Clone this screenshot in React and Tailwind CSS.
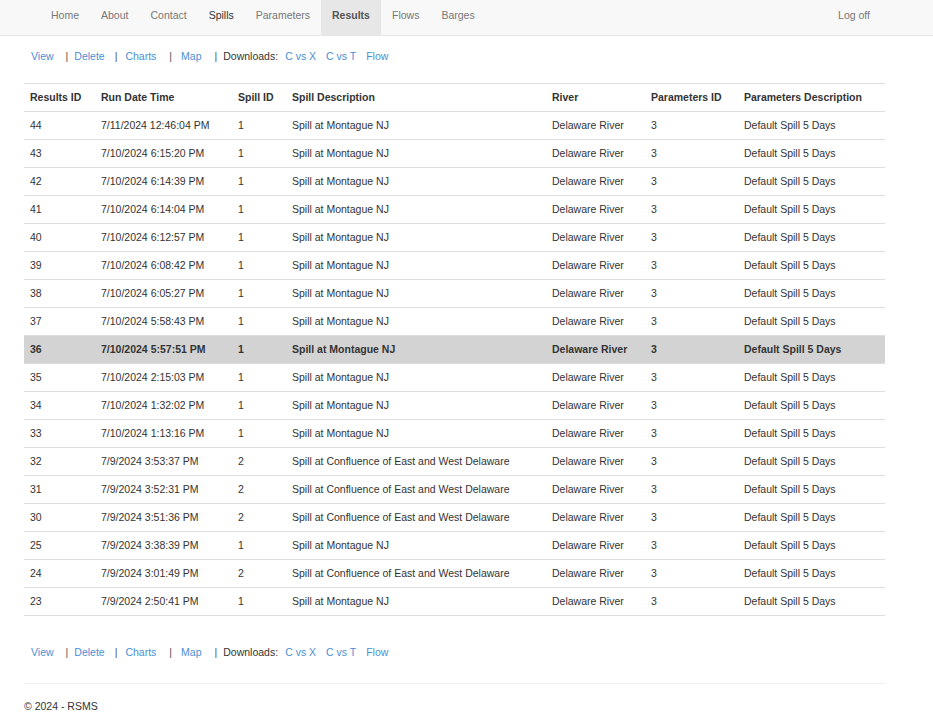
import React from 'react';

const navItems = [
  { label: 'Home', cls: 'text-[#777]' },
  { label: 'About', cls: 'text-[#777]' },
  { label: 'Contact', cls: 'text-[#777]' },
  { label: 'Spills', cls: 'text-[#333]' },
  { label: 'Parameters', cls: 'text-[#777]' },
  { label: 'Results', cls: 'text-[#555] font-bold bg-[#e7e7e7]' },
  { label: 'Flows', cls: 'text-[#777]' },
  { label: 'Barges', cls: 'text-[#777]' },
];

const montague = 'Spill at Montague NJ';
const confluence = 'Spill at Confluence of East and West Delaware';

const rows = [
  [44, '7/11/2024 12:46:04 PM', 1, montague],
  [43, '7/10/2024 6:15:20 PM', 1, montague],
  [42, '7/10/2024 6:14:39 PM', 1, montague],
  [41, '7/10/2024 6:14:04 PM', 1, montague],
  [40, '7/10/2024 6:12:57 PM', 1, montague],
  [39, '7/10/2024 6:08:42 PM', 1, montague],
  [38, '7/10/2024 6:05:27 PM', 1, montague],
  [37, '7/10/2024 5:58:43 PM', 1, montague],
  [36, '7/10/2024 5:57:51 PM', 1, montague],
  [35, '7/10/2024 2:15:03 PM', 1, montague],
  [34, '7/10/2024 1:32:02 PM', 1, montague],
  [33, '7/10/2024 1:13:16 PM', 1, montague],
  [32, '7/9/2024 3:53:37 PM', 2, confluence],
  [31, '7/9/2024 3:52:31 PM', 2, confluence],
  [30, '7/9/2024 3:51:36 PM', 2, confluence],
  [25, '7/9/2024 3:38:39 PM', 1, montague],
  [24, '7/9/2024 3:01:49 PM', 2, confluence],
  [23, '7/9/2024 2:50:41 PM', 1, montague],
];

const cols = ['w-[71px]', 'w-[137px]', 'w-[54px]', 'w-[260px]', 'w-[99px]', 'w-[93px]', 'w-[147px]'];
const headers = ['Results ID', 'Run Date Time', 'Spill ID', 'Spill Description', 'River', 'Parameters ID', 'Parameters Description'];

const ActionLinks = () => (
  <div className="flex items-center h-[16px] pl-[7px] text-[10.5px]">
    <a className="text-[#4a8fd4]">View</a>
    <span className="text-[#555] ml-[12px]">|</span>
    <a className="text-[#4a8fd4] ml-[6px]">Delete</a>
    <span className="text-[#555] ml-[10px]">|</span>
    <a className="text-[#4a8fd4] ml-[8px]">Charts</a>
    <span className="text-[#555] ml-[13px]">|</span>
    <a className="text-[#4a8fd4] ml-[9px]">Map</a>
    <span className="text-[#555] ml-[13px]">|</span>
    <span className="text-[#333] ml-[6px]">Downloads:</span>
    <a className="text-[#4a8fd4] ml-[7px]">C vs X</a>
    <a className="text-[#4a8fd4] ml-[10px]">C vs T</a>
    <a className="text-[#4a8fd4] ml-[10px]">Flow</a>
  </div>
);

export default function App() {
  return (
    <div className="min-h-screen bg-white text-[#333] text-[10.5px] font-['Liberation_Sans',Arial,sans-serif]">
      <nav className="h-[36px] bg-[#f8f8f8] border-b border-[#e7e7e7] flex justify-between pl-[40px] pr-[51px]">
        <ul className="flex h-[35px]">
          {navItems.map((n) => (
            <li key={n.label} className={`px-[11px] pb-[4px] flex items-center ${n.cls}`}>{n.label}</li>
          ))}
        </ul>
        <div className="flex items-center px-[12px] pb-[4px] text-[#777] h-[35px]">Log off</div>
      </nav>

      <div className="w-[861px] ml-[24px]">
        <div className="pt-[13px]">
          <ActionLinks />
        </div>

        <table className="mt-[18px] w-[861px] border-collapse table-fixed">
          <thead>
            <tr className="h-[28px] border-t border-b border-[#ddd]">
              {headers.map((h, i) => (
                <th key={h} className={`${cols[i]} text-left font-bold pl-[6px] text-[#333]`}>{h}</th>
              ))}
            </tr>
          </thead>
          <tbody>
            {rows.map((r) => {
              const hl = r[0] === 36;
              return (
                <tr key={r[0]} className={`h-[28px] border-b border-[#ddd] ${hl ? 'bg-[#d3d3d3] font-bold' : ''}`}>
                  <td className="pl-[6px]">{r[0]}</td>
                  <td className="pl-[6px]">{r[1]}</td>
                  <td className="pl-[6px]">{r[2]}</td>
                  <td className="pl-[6px]">{r[3]}</td>
                  <td className="pl-[6px]">Delaware River</td>
                  <td className="pl-[6px]">3</td>
                  <td className="pl-[6px]">Default Spill 5 Days</td>
                </tr>
              );
            })}
          </tbody>
        </table>

        <div className="mt-[29px]">
          <ActionLinks />
        </div>

        <hr className="mt-[22px] border-t border-[#eee]" />
        <footer className="mt-[15px] h-[16px] flex items-center text-[#333]">© 2024 - RSMS</footer>
      </div>
    </div>
  );
}
